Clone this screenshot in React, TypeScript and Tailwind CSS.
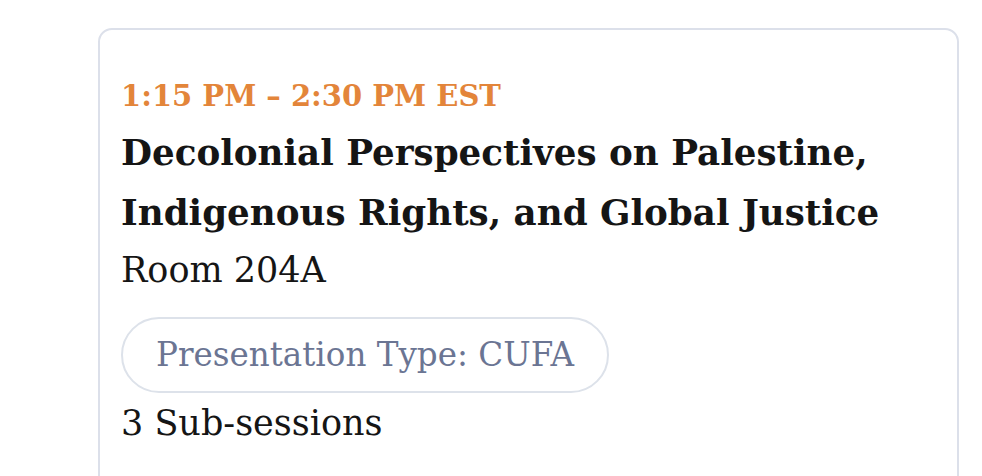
import React from 'react'

const App = () => {
  return (
    <div className="w-[982px] h-[476px] overflow-hidden bg-white" style={{ fontFamily: '"DejaVu Serif", "Liberation Serif", serif' }}>
      <div className="ml-[98px] mt-[28px] w-[861px] h-[480px] rounded-[14px] border-2 border-[#dce0ea] px-[21px] pt-[46px]">
        <div className="text-[29px] leading-[40px] font-bold text-[#e3853a]">1:15 PM – 2:30 PM EST</div>
        <div className="mt-[6px] text-[35.7px] leading-[60px] font-bold text-[#151515]">
          Decolonial Perspectives on Palestine,
          <br />
          Indigenous Rights, and Global Justice
        </div>
        <div className="mt-[6px] text-[35px] leading-[44px] text-[#151515]">Room 204A</div>
        <div className="mt-[25px] inline-flex h-[76px] items-center rounded-full border-2 border-[#dde2ea] pl-[33px] pr-[33px] text-[32.6px] text-[#6b7593]">
          Presentation Type: CUFA
        </div>
        <div className="text-[35px] leading-[60px] text-[#151515]">3 Sub-sessions</div>
      </div>
    </div>
  )
}

export default App
